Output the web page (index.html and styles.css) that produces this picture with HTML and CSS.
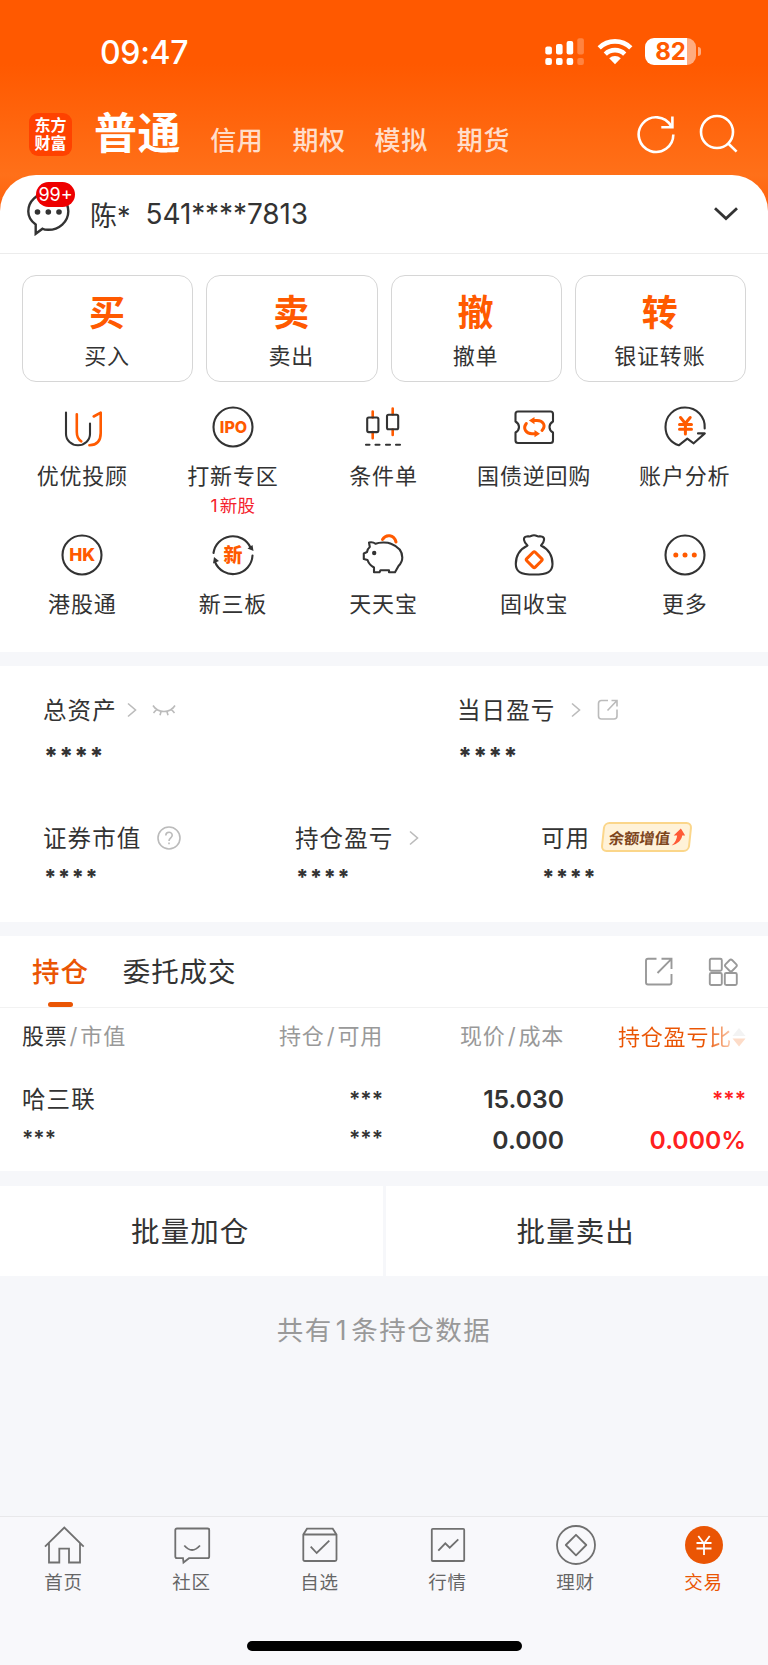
FILE: index.html
```
<!DOCTYPE html>
<html lang="zh-CN">
<head>
    <meta charset="UTF-8">
    <meta name="viewport" content="width=device-width, initial-scale=1.0">
    <title>交易</title>
    <link rel="stylesheet" href="styles.css">
</head>
<body>
    <div class="page">
        <div class="status-bar">
            <span class="time">09:47</span>
            <div class="status-icons">
                <svg class="signal" width="40" height="28" viewBox="0 0 40 28" fill="#fff">
                    <rect x="0.3" y="8.5" width="6.6" height="8" rx="2"/>
                    <rect x="11" y="6" width="6.6" height="10.5" rx="2"/>
                    <rect x="21.6" y="3" width="6.6" height="13.5" rx="2"/>
                    <rect x="0.3" y="20" width="6.6" height="7" rx="2"/>
                    <rect x="11" y="20" width="6.6" height="7" rx="2"/>
                    <rect x="21.6" y="20" width="6.6" height="7" rx="2"/>
                    <g opacity="0.25">
                        <rect x="32.3" y="0.3" width="6.6" height="16.2" rx="2"/>
                        <rect x="32.3" y="20" width="6.6" height="7" rx="2"/>
                    </g>
                </svg>
                <svg class="wifi" width="36" height="26" viewBox="0 0 36 26">
                    <g fill="none" stroke="#fff" stroke-width="4.6">
                        <path d="M2.2 8.9A22.5 22.5 0 0 1 33.8 8.9"/>
                        <path d="M8.3 15.1A13.8 13.8 0 0 1 27.7 15.1"/>
                    </g>
                    <path d="M12.2 19.3a8.3 8.3 0 0 1 11.6 0L18 25.3z" fill="#fff"/>
                </svg>
                <div class="battery"><span>82</span></div>
            </div>
        </div>

        <div class="nav">
            <div class="logo">东方<br>财富</div>
            <a class="nav-active">普通</a>
            <a>信用</a>
            <a>期权</a>
            <a>模拟</a>
            <a>期货</a>
            <svg class="nav-refresh" width="40" height="40" viewBox="0 0 40 40" fill="none" stroke="#fff" stroke-width="2.6">
                <path d="M37.3 20.4A17.3 17.3 0 1 1 35 12"/>
                <path d="M36.4 2.5V13.2H25.3"/>
            </svg>
            <svg class="nav-search" width="40" height="40" viewBox="0 0 40 40" fill="none" stroke="#fff" stroke-width="2.6">
                <circle cx="18" cy="18" r="16"/>
                <path d="M29 29.2l8.6 8.4"/>
            </svg>
        </div>

        <div class="account">
            <div class="message">
                <svg width="46" height="46" viewBox="0 0 46 46">
                    <path d="M10.7 34.5C5.8 31 3.3 26.5 3.3 21.5A20 18.500 0 1 1 23 39.800C20.500 39.800 19 39.500 17.500 38.700L10.700 43.800z" fill="#fff" stroke="#333" stroke-width="2.4"/>
                    <g fill="#333"><circle cx="12.5" cy="22" r="2.8"/><circle cx="23.3" cy="22" r="2.8"/><circle cx="34" cy="22" r="2.8"/></g>
                </svg>
                <span class="badge">99+</span>
            </div>
            <span class="name">陈*</span>
            <span class="number">541****7813</span>
            <svg class="down" width="26" height="16" viewBox="0 0 26 16" fill="none" stroke="#333" stroke-width="2.8"><path d="M2 2.2L13 12.6L24 2.2"/></svg>
        </div>

        <div class="trade-buttons">
            <div class="trade-btn"><b>买</b><span>买入</span></div>
            <div class="trade-btn"><b>卖</b><span>卖出</span></div>
            <div class="trade-btn"><b>撤</b><span>撤单</span></div>
            <div class="trade-btn"><b>转</b><span>银证转账</span></div>
        </div>

        <div class="menu">
            <div class="menu-item">
                <svg viewBox="0 0 44 44">
                    <path d="M6 7.5V29a12 11.2 0 0 0 24 0V18.5"/>
                    <path class="or" d="M16.8 9.3V27c0 5 1.5 7.5 4.5 9.3M33.7 11.5l7-3.8V28c0 8-4 12.2-11.3 12.3"/>
                </svg>
                <span>优优投顾</span>
            </div>
            <div class="menu-item">
                <svg viewBox="0 0 44 44">
                    <circle cx="22" cy="22" r="19.5"/>
                    <text x="22.500" y="28.200" class="ipo">IPO</text>
                </svg>
                <span>打新专区</span>
                <em><i>1</i>新股</em>
            </div>
            <div class="menu-item">
                <svg viewBox="0 0 44 44">
                    <path class="or" d="M11.7 6.5v6M11.7 27v6.3M31.7 3.5v6M31.7 24.5v5.5"/>
                    <rect x="6.2" y="12.5" width="11.2" height="14.6" rx="1.5"/>
                    <rect x="26" y="9.7" width="11.2" height="14.6" rx="1.5"/>
                    <path d="M5 39.7h3.5M14.5 39.7h4M25 39.7h4M35 39.7h4"/>
                </svg>
                <span>条件单</span>
            </div>
            <div class="menu-item">
                <svg viewBox="0 0 44 44">
                    <path d="M6 6.5H38.5Q41 6.5 41 9V16.5Q37.5 18.5 37.5 22T41 27.5V35.5Q41 38 38.5 38H6Q3.5 38 3.5 35.5V27.5Q7 25.5 7 22T3.5 16.5V9Q3.5 6.5 6 6.5z"/>
                    <path class="or thick" d="M14.3 18.5C10.5 23.5 14 28.7 20 28.7h3M30 25.500C34.500 20.500 31 15.500 25 15.500h-3"/>
                    <path class="orfill" d="M22.500 25l5.500 3.700-5.500 3.500zM22.500 12v7.200l-5.600-3.600z"/>
                </svg>
                <span>国债逆回购</span>
            </div>
            <div class="menu-item">
                <svg viewBox="0 0 44 44">
                    <path d="M41.7 23.5C42.5 11.5 33.5 2.5 22 2.5C11 2.5 2.5 11 2.5 22C2.5 31 8 38 15.8 40.3L24.3 33.7L30.7 38.3L41.8 28.4H35"/>
                    <path class="or thick" d="M17.5 12.5L22.3 18.5L27.2 12.5M16.5 19.5H28.5M16.5 24.2H28.5M22.4 19V29"/>
                </svg>
                <span>账户分析</span>
            </div>
            <div class="menu-item">
                <svg viewBox="0 0 44 44">
                    <circle cx="22" cy="22" r="19.5"/>
                    <text x="22.2" y="28.4" class="hk">HK</text>
                </svg>
                <span>港股通</span>
            </div>
            <div class="menu-item">
                <svg viewBox="0 0 44 44">
                    <path d="M2.5 20A19.5 19.5 0 0 1 39.5 14.5M41.5 22.5A19.5 19.5 0 0 1 4 29"/>
                    <path class="dkfill" d="M36.5 15.5l5-3.500 1 6zM2 30.500l1-6.500 5 4z"/>
                    <text x="22" y="28.800" class="xin">新</text>
                </svg>
                <span>新三板</span>
            </div>
            <div class="menu-item">
                <svg viewBox="0 0 44 44">
                    <path d="M8 9.5Q12 8.7 14.5 10.8C18 9.3 26 8.8 30 10.8C37 13.5 41.3 18 41.3 24.5C41.3 28 39.5 31 37.5 33L34 39.3H28V37.3H19.5L18.5 39.3H13V34.5C9.5 32.5 7.5 30 6.5 27L2.8 26V20.5L6 19C6.5 16.5 7.5 15 8.8 14z"/>
                    <circle class="dkfill" cx="13.2" cy="20" r="2.2"/>
                    <path class="or thick" d="M21.5 6.5C25 0.8 33 1.5 35 9"/>
                </svg>
                <span>天天宝</span>
            </div>
            <div class="menu-item">
                <svg viewBox="0 0 44 44">
                    <path d="M15.5 12.5C11.5 9 10.5 4 14.5 3.5C16.5 3 18 4 19 3Q22 1.5 25 3C26 4 27.5 3 29.5 3.5C33.5 4 32.5 9 29 12.5C36 16 40.5 22 40.5 31C40.5 38.5 36 41.5 22 41.5S3.8 38.5 3.8 31C3.8 22 8.5 16 15.5 12.5z"/>
                    <rect class="or thick" x="16.2" y="20.7" width="12" height="12" rx="1.5" transform="rotate(45 22.2 26.7)"/>
                </svg>
                <span>固收宝</span>
            </div>
            <div class="menu-item">
                <svg viewBox="0 0 44 44">
                    <circle cx="22" cy="22" r="19.5"/>
                    <g class="orfill"><circle cx="12.8" cy="22" r="2.5"/><circle cx="22" cy="22" r="2.5"/><circle cx="31.3" cy="22" r="2.5"/></g>
                </svg>
                <span>更多</span>
            </div>
        </div>

        <div class="assets">
            <div class="assets-top">
                <div class="asset">
                    <div class="asset-label">
                        <span>总资产</span>
                        <svg class="arrow" width="10" height="16" viewBox="0 0 10 16"><path d="M1 1.5L8.5 8L1 14.5"/></svg>
                        <svg class="eye" width="24" height="12" viewBox="0 0 24 12"><path d="M1 1.5C6 9.5 18 9.5 23 1.5M4.5 5.5L1.5 9M9 7.7L8 11.3M15 7.7L16 11.3M19.5 5.5L22.5 9"/></svg>
                    </div>
                    <div class="asset-value">****</div>
                </div>
                <div class="asset">
                    <div class="asset-label">
                        <span>当日盈亏</span>
                        <svg class="arrow arrow-far" width="10" height="16" viewBox="0 0 10 16"><path d="M1 1.5L8.5 8L1 14.5"/></svg>
                        <svg class="share" width="22" height="22" viewBox="0 0 22 22"><path d="M11 1.500H4.500Q1.500 1.500 1.500 4.500V17Q1.500 20 4.500 20H17Q20 20 20 17V10.500M14.500 1.500H20V7.500M20 1.500L10.500 11.500"/></svg>
                    </div>
                    <div class="asset-value">****</div>
                </div>
            </div>
            <div class="assets-bottom">
                <div class="asset">
                    <div class="asset-label">
                        <span>证券市值</span>
                        <svg class="help" width="24" height="24" viewBox="0 0 24 24"><circle cx="12" cy="12" r="11"/><path d="M8.8 9.500C8.800 5.200 15.200 5.200 15.200 9.300C15.200 11.800 12 12 12 15M12 16.500V18.300"/></svg>
                    </div>
                    <div class="asset-value">****</div>
                </div>
                <div class="asset">
                    <div class="asset-label">
                        <span>持仓盈亏</span>
                        <svg class="arrow arrow-far" width="10" height="16" viewBox="0 0 10 16"><path d="M1 1.5L8.5 8L1 14.5"/></svg>
                    </div>
                    <div class="asset-value">****</div>
                </div>
                <div class="asset">
                    <div class="asset-label">
                        <span>可用</span>
                        <div class="tag">
                            <span>余额增值</span>
                            <svg width="13" height="18" viewBox="0 0 13 18"><path d="M8 0.500L13 7.500H10C10 12 6.500 16 0.500 17.500C4 14.500 5 11 5 7.500H1.500z" fill="#ff5a36"/></svg>
                        </div>
                    </div>
                    <div class="asset-value">****</div>
                </div>
            </div>
        </div>

        <div class="holdings">
            <div class="tabs">
                <a class="tab tab-active">持仓</a>
                <a class="tab">委托成交</a>
                <svg class="tab-export" width="30" height="30" viewBox="0 0 30 30"><path d="M12.5 1.8H4Q2 1.8 2 3.8V25.5Q2 27.5 4 27.5H25.5Q27.5 27.5 27.5 25.5V17M17.5 1.8H27.5V12M27 2.3L13.5 16"/></svg>
                <svg class="tab-grid" width="30" height="30" viewBox="0 0 30 30"><rect x="1.8" y="1.8" width="12" height="12" rx="1.5"/><rect x="1.8" y="16" width="12" height="12" rx="1.5"/><rect x="16.8" y="16" width="12" height="12" rx="1.5"/><rect x="18.2" y="3.8" width="9.4" height="9.4" rx="2" transform="rotate(45 22.9 8.5)"/></svg>
            </div>
            <div class="row head">
                <span><b>股票</b><i>/</i>市值</span>
                <span>持仓<i>/</i>可用</span>
                <span>现价<i>/</i>成本</span>
                <span class="sort">持仓盈亏比<svg width="14" height="20" viewBox="0 0 14 20"><path d="M7 1l6.5 8h-13z" fill="#f3f3f3"/><path d="M7 19.5l6.5-8h-13z" fill="#fddcc8"/></svg></span>
            </div>
            <div class="row stock">
                <div><p class="stock-name">哈三联</p><p class="mask">***</p></div>
                <div><p class="mask">***</p><p class="mask">***</p></div>
                <div><p>15.030</p><p>0.000</p></div>
                <div class="red"><p class="mask">***</p><p>0.000%</p></div>
            </div>
        </div>

        <div class="batch">
            <div>批量加仓</div>
            <div>批量卖出</div>
        </div>
        <div class="summary">共有<i>1</i>条持仓数据</div>

        <div class="tabbar">
            <div class="tabbar-items">
                <a>
                    <svg viewBox="0 0 44 44"><path d="M3 23.7L22.3 4.5L41.7 23.7M7 20V39.5H17.3V25.7H27V39.5H38V20"/></svg>
                    <span>首页</span>
                </a>
                <a>
                    <svg viewBox="0 0 44 44"><path d="M7 5.5H37.5Q39.2 5.5 39.2 7V33.5Q39.2 35.2 37.5 35.2H19L13.5 39.5L13 35.2H7Q5.3 35.2 5.3 33.5V7Q5.3 5.5 7 5.5zM14.3 22.5Q22 31.5 30 22.5"/></svg>
                    <span>社区</span>
                </a>
                <a>
                    <svg viewBox="0 0 44 44"><path d="M5.3 11.5L9 5.7H34.7L38.5 11.5V36.5Q38.5 38 37 38H6.8Q5.3 38 5.3 36.5zM5.3 11.5H38.5M12.7 23.7L18.7 30L31.3 17.7"/></svg>
                    <span>自选</span>
                </a>
                <a>
                    <svg viewBox="0 0 44 44"><rect x="5.8" y="5.8" width="32.4" height="32.2" rx="1"/><path d="M12.3 27.7L19.3 20.3L23.7 24.7L32.3 16.3"/></svg>
                    <span>行情</span>
                </a>
                <a>
                    <svg viewBox="0 0 44 44"><circle cx="22" cy="22" r="19"/><path d="M22 11.8L32.3 22L22 32.3L11.8 22z" stroke-linejoin="round"/></svg>
                    <span>理财</span>
                </a>
                <a class="current">
                    <svg viewBox="0 0 44 44"><circle cx="22" cy="22" r="19"/><path d="M16.3 13L22 20.5L27.7 13M14.5 20H29.5M14.5 25.5H29.5M22 20.5V32"/></svg>
                    <span>交易</span>
                </a>
            </div>
            <div class="home-indicator"></div>
        </div>
    </div>
</body>
</html>
```
FILE: styles.css
```
:root {
    --orange: #ff5a00;
    --deep-orange: #ea5504;
    --text: #333333;
    --gray: #999999;
    --background: #f6f7fa;
}

* {
    margin: 0;
    padding: 0;
    box-sizing: border-box;
}

body {
    font-family: Inter, 'Noto Sans CJK SC', sans-serif;
    background-color: var(--background);
    color: var(--text);
}

svg {
    display: block;
    flex: none;
}

i, em {
    font-style: normal;
}

.page {
    display: flex;
    flex-direction: column;
    height: 1665px;
    background: linear-gradient(#ff5900 0, #ff5900 64px, #ff7019 175px, #ff5f0a 215px) no-repeat;
    background-size: 100% 215px;
}

/* status bar */
.status-bar {
    display: flex;
    justify-content: space-between;
    height: 94px;
    padding: 33px 68px 0 100px;
    color: #fff;
}

.time {
    font-size: 32px;
    font-weight: 500;
    line-height: 39px;
    letter-spacing: -0.3px;
}

.status-icons {
    display: flex;
    align-items: center;
    height: 37px;
}

.wifi {
    margin: 0 12px 0 12px;
}

.battery {
    position: relative;
    width: 51px;
    height: 27px;
    margin-right: 4px;
    border-radius: 9px;
    background: linear-gradient(90deg, #fff 82%, rgba(255, 255, 255, 0.5) 82%);
    color: var(--orange);
    font-size: 24px;
    font-weight: 700;
    line-height: 27px;
    text-align: center;
}

.battery::after {
    content: "";
    position: absolute;
    right: -5px;
    top: 9px;
    width: 3px;
    height: 9px;
    border-radius: 0 3px 3px 0;
    background: rgba(255, 255, 255, 0.5);
}

/* account type nav */
.nav {
    display: flex;
    align-items: center;
    height: 81px;
    padding: 0 29px;
    color: rgba(255, 255, 255, 0.8);
    font-size: 26px;
    letter-spacing: 0.6px;
}

.nav a {
    margin-right: 29px;
    line-height: 40px;
    padding-top: 13px;
    font-weight: 500;
    white-space: nowrap;
}

.nav .nav-active {
    margin-left: 22px;
    padding: 0 0 3px;
    color: #fff;
    font-size: 43px;
    font-weight: 700;
    line-height: 60px;
}

.logo {
    flex: none;
    width: 43px;
    height: 43px;
    padding-top: 3px;
    border-radius: 9px;
    background-color: #ff4200;
    color: #fff;
    font-size: 16px;
    font-weight: 700;
    line-height: 18px;
    letter-spacing: 0;
    text-align: center;
}

.nav-refresh {
    margin: -2px 0 0 auto;
}

.nav-search {
    margin: -2px 0 0 23px;
}

/* account row */
.account {
    display: flex;
    align-items: center;
    height: 79px;
    padding: 0 29px 0 25px;
    border-bottom: 1px solid #ececec;
    border-radius: 36px 36px 0 0;
    background-color: #fff;
    font-size: 27px;
}

.message {
    position: relative;
    margin: -2px 19px 0 0;
}

.badge {
    position: absolute;
    left: 11px;
    top: -8px;
    width: 39px;
    height: 25px;
    border-radius: 13px;
    background-color: #ee0000;
    color: #fff;
    font-size: 18px;
    line-height: 25px;
    text-align: center;
}

.name {
    margin-right: 15px;
}

.number {
    font-size: 28px;
    letter-spacing: -0.1px;
}

.down {
    margin-left: auto;
}

/* trade buttons */
.trade-buttons {
    display: grid;
    grid-template-columns: repeat(4, 1fr);
    gap: 13px;
    padding: 21px 22px 0;
    background-color: #fff;
}

.trade-btn {
    display: flex;
    flex-direction: column;
    align-items: center;
    height: 107px;
    padding: 13px 1px 0 0;
    border: 1px solid #d6d6d6;
    border-radius: 14px;
    font-size: 22px;
    letter-spacing: 0.8px;
}

.trade-btn b {
    color: var(--orange);
    font-size: 36px;
    line-height: 48px;
    letter-spacing: 0;
}

.trade-btn span {
    line-height: 39px;
}

/* function menu */
.menu {
    display: grid;
    grid-template-columns: repeat(5, 1fr);
    grid-auto-rows: 128.6px;
    height: 270px;
    padding: 22.5px 8px 0 7px;
    background-color: #fff;
    font-size: 22px;
    letter-spacing: 0.8px;
}

.menu-item {
    display: flex;
    flex-direction: column;
    align-items: center;
    white-space: nowrap;
}

.menu-item svg {
    width: 44px;
    height: 44px;
    fill: none;
    stroke: #333;
    stroke-width: 2.1;
    stroke-linecap: round;
    stroke-linejoin: round;
}

.menu-item .or {
    stroke: var(--orange);
    stroke-width: 2.6;
}

.menu-item .thick {
    stroke-width: 3;
}

.menu-item .orfill {
    fill: var(--orange);
    stroke: none;
}

.menu-item .dkfill {
    fill: #333;
    stroke: none;
}

.menu-item text {
    fill: var(--orange);
    stroke: none;
    font-weight: 800;
    text-anchor: middle;
    letter-spacing: 0;
}

.menu-item .ipo {
    font-size: 16px;
}

.menu-item .hk {
    font-size: 17.5px;
}

.menu-item .xin {
    font-size: 19px;
}

.menu-item span {
    margin-top: 11px;
    line-height: 32px;
}

.menu-item em {
    margin-top: 1px;
    color: #f5222d;
    font-size: 17.5px;
    line-height: 26px;
    letter-spacing: 0.3px;
}

.menu-item em i {
    margin-right: 2px;
}

/* assets */
.assets {
    height: 256px;
    margin-top: 14px;
    padding: 26px 44px 0 43px;
    background-color: #fff;
    font-size: 23.5px;
    letter-spacing: 1.1px;
}

.assets-top {
    display: grid;
    grid-template-columns: 414px 1fr;
    height: 128px;
}

.assets-bottom {
    display: grid;
    grid-template-columns: 252px 246px 1fr;
}

.asset-label {
    display: flex;
    align-items: center;
    height: 36px;
    white-space: nowrap;
}

.asset-label > span {
    padding-bottom: 2px;
}

.asset-label svg {
    fill: none;
    stroke: #bbb;
    stroke-width: 1.6;
}

.asset-value {
    padding-left: 1px;
    font-size: 24px;
    font-weight: 800;
    line-height: 30px;
    letter-spacing: 1.2px;
}

.assets-top .asset-value {
    margin-top: 14px;
}

.assets-bottom .asset-value {
    font-size: 21.5px;
    margin-top: 6px;
}

.arrow {
    margin-left: 10px;
}

.arrow-far {
    margin-left: 16px;
}

.eye {
    margin-left: 15px;
}

.share,
.help {
    margin-left: 16px;
}

.tag {
    display: flex;
    align-items: center;
    gap: 2px;
    height: 30px;
    margin: -2px 0 0 12px;
    padding: 0 4px 0 5px;
    border: 2px solid #fbd68a;
    border-radius: 6px;
    background-color: #fff2d8;
    color: #7d451c;
    font-size: 15.3px;
    font-weight: 700;
    letter-spacing: 0;
    transform: skewX(-6deg);
}

.asset-label .tag svg {
    stroke: none;
}

/* holdings */
.holdings {
    height: 235px;
    margin-top: 14px;
    background-color: #fff;
}

.tabs {
    display: flex;
    align-items: center;
    height: 72px;
    padding: 0 30px 0 32px;
    border-bottom: 1px solid #f2f2f2;
    font-size: 27.5px;
    letter-spacing: 0.9px;
}

.tab {
    position: relative;
    margin-right: 34px;
    padding-top: 2px;
    line-height: 69px;
}

.tab-active {
    color: var(--deep-orange);
    font-weight: 500;
}

.tab-active::after {
    content: "";
    position: absolute;
    left: 16px;
    bottom: 0;
    width: 25px;
    height: 5px;
    border-radius: 2.5px;
    background-color: var(--deep-orange);
}

.tabs svg {
    fill: none;
    stroke: #999;
    stroke-width: 1.9;
}

.tab-export {
    margin-left: auto;
}

.tab-grid {
    margin-left: 34px;
}

.row {
    display: grid;
    grid-template-columns: 150px 1fr 181px 182px;
    padding: 0 22px;
    text-align: right;
}

.row > :first-child {
    text-align: left;
}

.head {
    height: 58px;
    color: var(--gray);
    font-size: 22px;
    line-height: 57px;
    letter-spacing: 0.8px;
    white-space: nowrap;
}

.head b {
    color: var(--text);
    font-weight: 400;
}

.head i {
    margin: 0 2px;
}

.sort {
    display: flex;
    align-items: center;
    justify-content: flex-end;
    background: linear-gradient(90deg, var(--deep-orange) 78%, #fddcc8 94%);
    background-clip: text;
    -webkit-background-clip: text;
    color: transparent;
}

.stock {
    padding-top: 13px;
    font-size: 24.7px;
    font-weight: 600;
    line-height: 41px;
}

.stock .stock-name {
    font-size: 23.5px;
    font-weight: 400;
    letter-spacing: 1.1px;
}

.stock .mask {
    font-size: 21px;
}

.stock .mask:last-child {
    line-height: 38px;
}

.red {
    color: #ff2020;
}

/* batch actions */
.batch {
    display: grid;
    grid-template-columns: 1fr 1fr;
    gap: 3px;
    margin-top: 15px;
}

.batch div {
    height: 90px;
    padding: 1px 2px 0 0;
    background-color: #fff;
    font-size: 28.5px;
    line-height: 90px;
    letter-spacing: 1.1px;
    text-align: center;
}

.summary {
    margin-top: 34px;
    color: var(--gray);
    font-size: 26.5px;
    line-height: 40px;
    letter-spacing: 1.5px;
    text-align: center;
}

.summary i {
    margin: 0 3px;
}

/* bottom tab bar */
.tabbar {
    height: 149px;
    margin-top: auto;
    border-top: 1px solid #e8e8ea;
    background-color: #f8f8fb;
}

.tabbar-items {
    display: grid;
    grid-template-columns: repeat(6, 1fr);
    height: 124px;
    padding-top: 6px;
}

.tabbar a {
    display: flex;
    flex-direction: column;
    align-items: center;
    padding-right: 1px;
    color: #666;
    font-size: 18.5px;
    line-height: 30px;
    letter-spacing: 0.8px;
}

.tabbar a svg {
    width: 44px;
    height: 44px;
    fill: none;
    stroke: #707070;
    stroke-width: 1.8;
}

.tabbar .current {
    color: var(--deep-orange);
}

.tabbar .current svg {
    stroke: #fff;
}

.tabbar .current circle {
    fill: var(--deep-orange);
    stroke: none;
}

.home-indicator {
    width: 275px;
    height: 10px;
    margin: 0 auto;
    border-radius: 5px;
    background-color: #000;
}
```
